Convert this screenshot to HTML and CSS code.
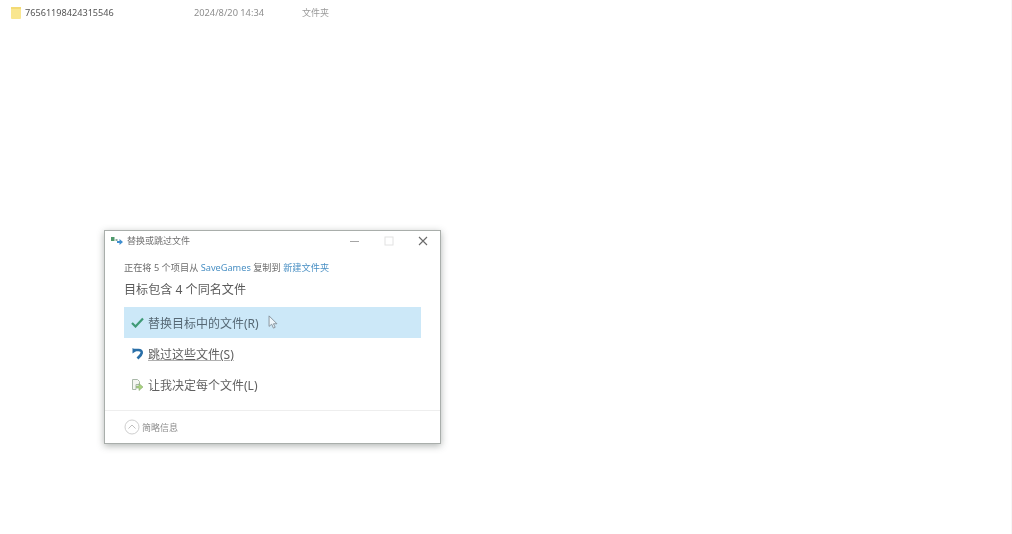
FILE: index.html
```html
<!DOCTYPE html>
<html lang="zh">
<head>
<meta charset="utf-8">
<title>替换或跳过文件</title>
<link rel="stylesheet" href="styles.css">
</head>
<body>
<div class="file-row">
  <svg class="folder" width="10" height="12" viewBox="0 0 10 12"><rect width="10" height="12" rx="1" fill="#f9e68f"/><rect width="10" height="2" fill="#f3da74"/></svg>
  <span class="file-name">76561198424315546</span>
  <span class="file-date">2024/8/20 14:34</span>
  <span class="file-type">文件夹</span>
</div>
<section class="dialog">
  <header class="title-bar">
    <svg class="app-icon" width="12" height="8" viewBox="0 0 12 8"><rect x="0" y="0" width="3.500" height="4" fill="#4f9a6c"/><rect x="4.500" y="2" width="2" height="2" fill="#8aa89c"/><path d="M6 4h2.500V2L12 5 8.500 8V6H6z" fill="#3f8fd0"/></svg>
    <span class="title">替换或跳过文件</span>
    <div class="controls">
      <svg width="10" height="10" viewBox="0 0 10 10"><path d="M0 5.500h9" stroke="#a5a5a5" stroke-width="1"/></svg>
      <svg width="10" height="10" viewBox="0 0 10 10"><rect x="1" y="1" width="8" height="8" fill="none" stroke="#e2e2e2"/></svg>
      <svg width="10" height="10" viewBox="0 0 10 10"><path d="M1 1l8 8M9 1l-8 8" stroke="#6a6a6a" stroke-width="1.100"/></svg>
    </div>
  </header>
  <div class="body">
    <p class="status">正在将 5 个项目从 <a class="link">SaveGames</a> 复制到 <a class="link">新建文件夹</a></p>
    <h1 class="heading">目标包含 4 个同名文件</h1>
    <ul class="options">
      <li class="option active">
        <svg width="13" height="11" viewBox="0 0 13 11"><path d="M1 6l3.500 3.500L12 1.500" fill="none" stroke="#3f9a76" stroke-width="2.200"/></svg>
        <span>替换目标中的文件(R)</span>
      </li>
      <li class="option">
        <svg width="13" height="13" viewBox="0 0 13 13"><path d="M3 3h4.500C10 3 11 4.200 10.700 6C10.400 8 8.500 9.500 6.500 11.500" fill="none" stroke="#2a6fa8" stroke-width="2.600"/><path d="M1.500 1v5.500L6 3.500z" fill="#2a6fa8"/></svg>
        <span class="skip">跳过这些文件(S)</span>
      </li>
      <li class="option">
        <svg width="13" height="14" viewBox="0 0 13 14"><path d="M1.500 1.500h5l2 2v3H5v5H1.500z" fill="#f4f6f2" stroke="#a9b8a9"/><path d="M5.500 8h2.500V5.500l4 3.500-4 3.500V10H5.500z" fill="#a9d27c" stroke="#8aa878" stroke-width="0.600"/></svg>
        <span>让我决定每个文件(L)</span>
      </li>
    </ul>
  </div>
  <footer class="footer">
    <svg width="16" height="16" viewBox="0 0 16 16"><circle cx="8" cy="8" r="7" fill="none" stroke="#cfcfcf"/><path d="M4.500 9.500L8 6l3.500 3.500" fill="none" stroke="#c0c0c0"/></svg>
    <span>简略信息</span>
  </footer>
  <svg class="cursor" width="10" height="14" viewBox="0 0 11 16"><path d="M1 1v12l3-2.500 2 4.500 2-1-2-4h4z" fill="#eef6fb" stroke="#7f8a94"/></svg>
</section>
</body>
</html>
```
FILE: styles.css
```css
* { box-sizing: border-box; }
html, body { height: 100%; }
body {
  margin: 0;
  background: #fff;
  border-right: 1px solid #f6f6f6;
  overflow: hidden;
  position: relative;
  font-family: "Noto Sans", "Noto Sans CJK SC", sans-serif;
  color: #4a4a4a;
}
.file-row {
  display: flex;
  align-items: center;
  height: 12px;
  margin-top: 6px;
  padding-left: 11px;
  font-size: 9px;
  filter: blur(0.5px);
}
.folder { flex: none; margin-right: 4px; position: relative; top: 1px; }
.file-name { width: 169px; color: #555; font-size: 9.150px; }
.file-date { width: 108px; color: #8e8e8e; font-size: 9.250px; }
.file-type { color: #9a9a9a; }
.dialog {
  position: absolute;
  left: 104px;
  top: 230px;
  width: 337px;
  height: 214px;
  background: #fff;
  border: 1px solid #a9aeab;
  box-shadow: 0 2px 7px rgba(60, 70, 65, 0.4);
  display: flex;
  flex-direction: column;
}
.title-bar {
  display: flex;
  align-items: center;
  height: 20px;
  padding: 0 12px 0 6px;
  flex: none;
  font-size: 9px;
  color: #707070;
}
.app-icon { margin-right: 4px; filter: blur(0.5px); }
.title { filter: blur(0.55px); line-height: 20px; }
.controls {
  margin-left: auto;
  display: flex;
  gap: 24px;
  filter: blur(0.4px);
}
.body { flex: 1; padding: 10px 19px 0 19px; }
.status {
  margin: 0;
  font-size: 9.200px;
  line-height: 14px;
  color: #6c6c6c;
  filter: blur(0.55px);
}
.link { color: #4a90c4; }
.heading {
  margin: 6px 0 0;
  font-size: 12.100px;
  line-height: 17px;
  font-weight: 400;
  color: #5a5a5a;
  filter: blur(0.5px);
}
.options {
  list-style: none;
  margin: 9px 0 0;
  padding: 0;
  width: 297px;
}
.option {
  display: flex;
  align-items: center;
  gap: 4px;
  height: 31px;
  padding-left: 7px;
  font-size: 12px;
  color: #606060;
}
.option svg, .option span { filter: blur(0.5px); }
.active { background: #cce8f8; color: #566874; }
.skip { text-decoration: underline; text-decoration-color: #b0b0b0; text-decoration-thickness: 1px; }
.footer {
  position: absolute;
  left: 0;
  right: 0;
  bottom: 0;
  height: 33px;
  border-top: 1px solid #eeeeee;
  display: flex;
  align-items: center;
  gap: 2px;
  padding-left: 19px;
  font-size: 9px;
  color: #8c8c8c;
}
.footer span { filter: blur(0.55px); }
.cursor {
  position: absolute;
  left: 163px;
  top: 84px;
  filter: blur(0.4px);
}
```
